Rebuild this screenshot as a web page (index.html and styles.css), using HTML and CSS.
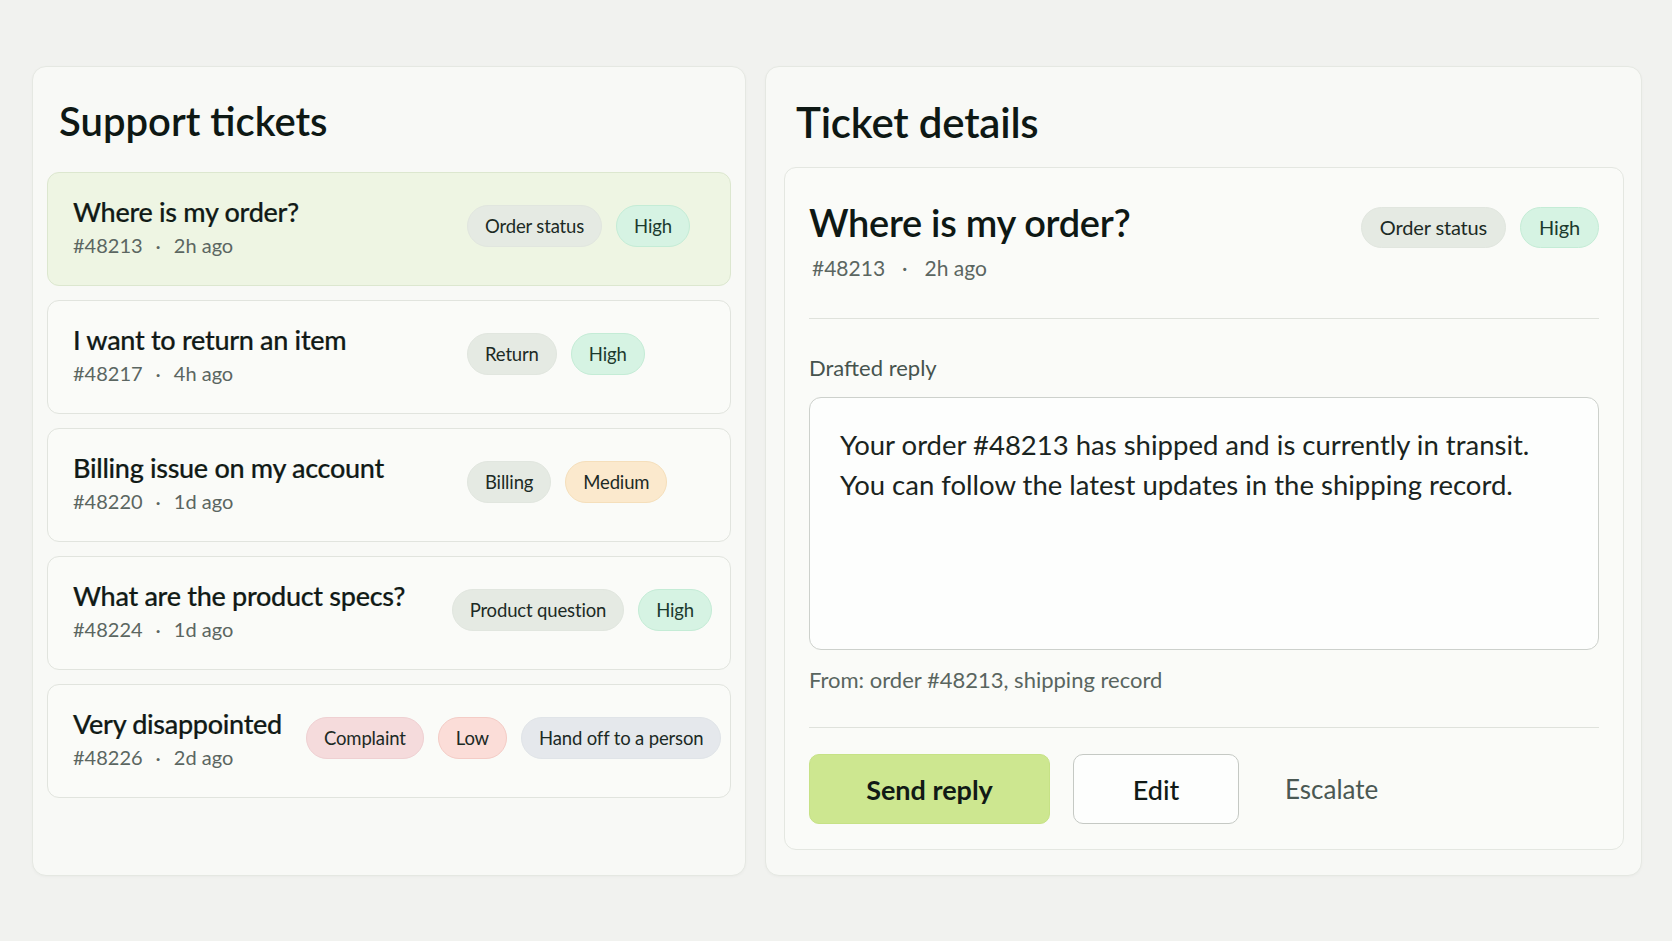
FILE: index.html
```html
<!DOCTYPE html>
<html lang="en">
<head>
    <meta charset="UTF-8">
    <meta name="viewport" content="width=device-width, initial-scale=1.0">
    <title>Support tickets</title>
    <link rel="stylesheet" href="styles.css">
</head>
<body>
    <div class="page">
        <section class="panel tickets-panel">
            <h2 class="panel-title">Support tickets</h2>
            <div class="ticket-list">
                <div class="ticket selected">
                    <div class="ticket-info">
                        <div class="ticket-title">Where is my order?</div>
                        <div class="ticket-meta"><span>#48213</span><span class="dot">·</span><span>2h ago</span></div>
                    </div>
                    <div class="tags">
                        <span class="tag">Order status</span>
                        <span class="tag high">High</span>
                    </div>
                </div>
                <div class="ticket">
                    <div class="ticket-info">
                        <div class="ticket-title">I want to return an item</div>
                        <div class="ticket-meta"><span>#48217</span><span class="dot">·</span><span>4h ago</span></div>
                    </div>
                    <div class="tags">
                        <span class="tag">Return</span>
                        <span class="tag high">High</span>
                    </div>
                </div>
                <div class="ticket">
                    <div class="ticket-info">
                        <div class="ticket-title">Billing issue on my account</div>
                        <div class="ticket-meta"><span>#48220</span><span class="dot">·</span><span>1d ago</span></div>
                    </div>
                    <div class="tags">
                        <span class="tag">Billing</span>
                        <span class="tag medium">Medium</span>
                    </div>
                </div>
                <div class="ticket">
                    <div class="ticket-info">
                        <div class="ticket-title">What are the product specs?</div>
                        <div class="ticket-meta"><span>#48224</span><span class="dot">·</span><span>1d ago</span></div>
                    </div>
                    <div class="tags">
                        <span class="tag">Product question</span>
                        <span class="tag high">High</span>
                    </div>
                </div>
                <div class="ticket">
                    <div class="ticket-info">
                        <div class="ticket-title">Very disappointed</div>
                        <div class="ticket-meta"><span>#48226</span><span class="dot">·</span><span>2d ago</span></div>
                    </div>
                    <div class="tags">
                        <span class="tag complaint">Complaint</span>
                        <span class="tag low">Low</span>
                        <span class="tag handoff">Hand off to a person</span>
                    </div>
                </div>
            </div>
        </section>

        <section class="panel details-panel">
            <h2 class="panel-title">Ticket details</h2>
            <div class="detail-card">
                <div class="detail-header">
                    <div>
                        <div class="detail-title">Where is my order?</div>
                        <div class="detail-meta"><span>#48213</span><span class="dot">·</span><span>2h ago</span></div>
                    </div>
                    <div class="tags detail-tags">
                        <span class="tag">Order status</span>
                        <span class="tag high">High</span>
                    </div>
                </div>
                <hr class="divider">
                <div class="field-label">Drafted reply</div>
                <div class="reply-box">
                    Your order #48213 has shipped and is currently in transit.<br>
                    You can follow the latest updates in the shipping record.
                </div>
                <div class="source">From: order #48213, shipping record</div>
                <hr class="divider actions-divider">
                <div class="actions">
                    <button class="btn btn-send">Send reply</button>
                    <button class="btn btn-edit">Edit</button>
                    <button class="btn btn-link">Escalate</button>
                </div>
            </div>
        </section>
    </div>
</body>
</html>
```

FILE: styles.css
```css
body {
    margin: 0;
    padding: 0;
    background-color: #f1f2ef;
    font-family: 'Lato', 'Liberation Sans', sans-serif;
    color: #111a16;
}
.page {
    display: flex;
    gap: 19px;
    padding: 66px 30px 65px 32px;
    height: 941px;
    box-sizing: border-box;
}
.panel {
    background-color: #f8f9f6;
    border: 1px solid #e5e8e2;
    border-radius: 14px;
    box-shadow: 0 1px 3px rgba(0, 0, 0, 0.03);
    box-sizing: border-box;
    padding: 30px 14px 26px 14px;
}
.tickets-panel {
    width: 714px;
}
.details-panel {
    width: 877px;
    padding: 30px 17px 25px 18px;
    display: flex;
    flex-direction: column;
}
.panel-title {
    margin: 0;
    font-size: 40px;
    line-height: 48px;
    font-weight: 600;
    color: #0e1814;
    padding-left: 12px;
}
.details-panel .panel-title {
    font-size: 42px;
    line-height: 50px;
    padding-left: 12px;
    margin-bottom: 20px;
    letter-spacing: -0.2px;
}
.ticket-list {
    margin-top: 27px;
    display: flex;
    flex-direction: column;
    gap: 14px;
}
.ticket {
    height: 114px;
    box-sizing: border-box;
    display: flex;
    align-items: center;
    gap: 24px;
    padding: 0 18px 0 25px;
    background-color: #fafbf8;
    border: 1px solid #e1e4de;
    border-radius: 12px;
}
.ticket.selected {
    background-color: #eef5e3;
    border-color: #dce7cf;
}
.ticket-info {
    flex: 0 1 370px;
    white-space: nowrap;
    margin-bottom: 4px;
}
.ticket-title {
    font-size: 27px;
    line-height: 32px;
    font-weight: 500;
    letter-spacing: -0.3px;
    color: #111a16;
    -webkit-text-stroke: 0.2px #111a16;
}
.ticket-meta, .detail-meta {
    font-size: 20px;
    line-height: 26px;
    color: #5b6661;
    margin-top: 4px;
}
.dot {
    display: inline-block;
    padding: 0 13px;
}
.tags {
    display: flex;
    gap: 14px;
    flex-shrink: 0;
}
.ticket .tags {
    margin-bottom: 6px;
}
.tag {
    display: inline-block;
    height: 42px;
    line-height: 40px;
    box-sizing: border-box;
    padding: 0 17px;
    border-radius: 21px;
    font-size: 18.5px;
    letter-spacing: -0.15px;
    color: #1c2a25;
    background-color: #e5eae3;
    border: 1px solid #e1e6df;
    white-space: nowrap;
}
.tag.high {
    background-color: #d6f3e3;
    border-color: #c4ecd6;
    color: #1b3a2e;
}
.tag.medium {
    background-color: #fbe9cd;
    border-color: #f5dfbb;
}
.tag.complaint {
    background-color: #f5dbdc;
    border-color: #efd0d2;
}
.tag.low {
    background-color: #fbddd8;
    border-color: #f4ccc6;
}
.tag.handoff {
    background-color: #e5e8ec;
    border-color: #e0e4e8;
}
.detail-card {
    flex-grow: 1;
    background-color: #fafbf8;
    border: 1px solid #e4e7e1;
    border-radius: 12px;
    padding: 31px 24px 25px 24px;
}
.detail-header {
    display: flex;
    justify-content: space-between;
    align-items: flex-start;
}
.detail-title {
    font-size: 38px;
    line-height: 46px;
    font-weight: 600;
    letter-spacing: -0.3px;
    color: #0e1814;
}
.detail-meta {
    font-size: 21px;
    line-height: 28px;
    margin-top: 9px;
    padding-left: 3px;
}
.detail-meta .dot {
    padding: 0 17px;
}
.detail-tags {
    margin-top: 8px;
    margin-right: 0;
}
.detail-tags .tag {
    font-size: 20px;
    height: 41px;
    line-height: 39px;
    padding: 0 18px;
}
.divider {
    border: none;
    border-top: 1px solid #dfe2dc;
    margin: 36px 0 0 0;
}
.field-label {
    margin-top: 35px;
    font-size: 22px;
    line-height: 28px;
    color: #46534e;
}
.reply-box {
    margin-top: 15px;
    height: 253px;
    box-sizing: border-box;
    padding: 27px 30px;
    background-color: #fdfefd;
    border: 1.5px solid #cdd1cc;
    border-radius: 12px;
    font-size: 27.5px;
    line-height: 40px;
    color: #1a2420;
}
.source {
    margin-top: 16px;
    font-size: 22px;
    line-height: 28px;
    color: #59655f;
}
.actions-divider {
    margin-top: 33px;
}
.actions {
    display: flex;
    gap: 23px;
    margin-top: 26px;
}
.btn {
    height: 70px;
    border-radius: 10px;
    font-family: 'Lato', 'Liberation Sans', sans-serif;
    font-size: 27px;
    cursor: pointer;
    color: #111a16;
}
.btn-send {
    width: 241px;
    background-color: #cde790;
    border: 1px solid #c6e286;
    font-weight: 700;
}
.btn-edit {
    width: 166px;
    background-color: #fdfefd;
    border: 1.5px solid #c5c9c4;
    font-weight: 500;
}
.btn-link {
    background: none;
    border: none;
    padding: 0 23px;
    font-size: 26px;
    color: #4a5853;
}
```
